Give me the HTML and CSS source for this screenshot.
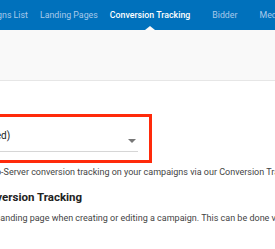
FILE: index.html
```html
<!DOCTYPE html>
<html>
<head>
    <meta charset="UTF-8">
    <title>Conversion Tracking</title>
    <link rel="stylesheet" href="styles.css">
</head>
<body>
    <nav class="topnav">
        <a class="nav-item">Campaigns List</a>
        <a class="nav-item">Landing Pages</a>
        <a class="nav-item active">Conversion Tracking</a>
        <a class="nav-item">Bidder</a>
        <a class="nav-item">Media Buying</a>
    </nav>
    <div class="subbar"></div>

    <div class="main">
        <div class="field-box">
            <div class="select">
                <span class="select-value">Postback URL (recommended)</span>
                <span class="select-arrow"></span>
            </div>
        </div>

        <p class="intro">Enable Server-to-Server conversion tracking on your campaigns via our Conversion Tracking URL.</p>
        <h3 class="section-title">Setting Up Conversion Tracking</h3>
        <p class="intro intro-second">Select a landing page when creating or editing a campaign. This can be done via the campaign form.</p>
    </div>
</body>
</html>
```

FILE: styles.css
```css
body {
    margin: 0;
    font-family: Roboto, "Liberation Sans", sans-serif;
    background: #fff;
    color: #222;
    overflow: hidden;
}

.topnav {
    background: #0071bc;
    height: 30px;
    display: flex;
    align-items: center;
    gap: 12px;
    margin-left: -33px;
    white-space: nowrap;
    font-size: 8.8px;
}
.nav-item {
    color: #a9c9ea;
    position: relative;
}
.nav-item.active {
    color: #fff;
    font-weight: 500;
}
.nav-item.active ~ .nav-item {
    margin-left: 10px;
}
.nav-item.active::after {
    content: "";
    position: absolute;
    left: 50%;
    bottom: -10px;
    margin-left: -5px;
    border: 5px solid transparent;
    border-bottom: 4px solid #f9f9f9;
    border-top: 0;
}

.subbar {
    height: 50px;
    background: #f9f9f9;
    border-bottom: 1px solid #e6e6e6;
}

.main {
    padding-top: 33px;
}

.field-box {
    border: 3px solid #ff2a0a;
    width: 264px;
    height: 43px;
    margin-left: -143px;
    padding: 0 11px 0 14px;
}
.select {
    box-sizing: border-box;
    margin-top: 10px;
    height: 25px;
    padding-bottom: 8px;
    border-bottom: 1px solid #d6d6d6;
    display: flex;
    justify-content: space-between;
    font-size: 10px;
    color: #222;
    white-space: nowrap;
}
.select-value {
    align-self: center;
}
.select-arrow {
    align-self: flex-end;
    width: 0;
    height: 0;
    border-left: 4px solid transparent;
    border-right: 4px solid transparent;
    border-top: 4px solid #777;
    margin-right: 2px;
}

.intro {
    font-size: 9px;
    color: #444;
    margin: 4px 0 0 -64px;
    white-space: nowrap;
}
.intro-second {
    margin: 0 0 0 -36px;
}
.section-title {
    font-size: 11.5px;
    font-weight: 700;
    margin: 13px 0 9px -81px;
    white-space: nowrap;
}
```
